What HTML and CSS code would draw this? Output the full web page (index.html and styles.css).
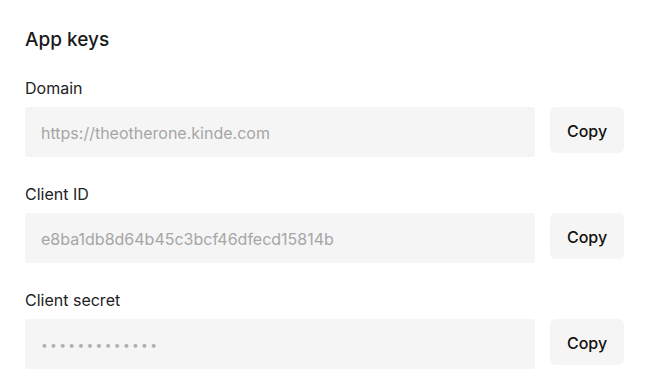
FILE: index.html
```html
<!DOCTYPE html>
<html>
<head>
<meta charset="utf-8">
<link rel="stylesheet" href="styles.css">
</head>
<body>
<section class="panel">
  <h2 class="title">App keys</h2>
  <div class="field">
    <label class="label">Domain</label>
    <div class="row">
      <div class="input">https://theotherone.kinde.com</div>
      <button class="copy">Copy</button>
    </div>
  </div>
  <div class="field">
    <label class="label">Client ID</label>
    <div class="row">
      <div class="input">e8ba1db8d64b45c3bcf46dfecd15814b</div>
      <button class="copy">Copy</button>
    </div>
  </div>
  <div class="field">
    <label class="label">Client secret</label>
    <div class="row">
      <div class="input secret">•••••••••••••</div>
      <button class="copy">Copy</button>
    </div>
  </div>
</section>
</body>
</html>
```
FILE: styles.css
```css
html, body {
  margin: 0;
  background: #ffffff;
  font-family: Inter, "Noto Sans", sans-serif;
  color: #1a1a1a;
}
.panel {
  padding: 28px 30px 0 25px;
  display: flex;
  flex-direction: column;
}
.title {
  margin: 0 0 25px 0;
  font-size: 19px;
  line-height: 24px;
  font-weight: 500;
  color: #1a1a1a;
}
.field {
  display: flex;
  flex-direction: column;
  gap: 10px;
  margin-bottom: 26px;
}
.label {
  font-size: 16px;
  line-height: 20px;
  font-weight: 400;
  color: #222;
  padding-top: 1px;
  margin-bottom: -1px;
}
.row {
  display: flex;
  align-items: flex-start;
  gap: 15px;
}
.input {
  width: 510px;
  height: 50px;
  box-sizing: border-box;
  padding: 1px 16px 0;
  display: flex;
  align-items: center;
  background: #f5f5f5;
  border-radius: 3px;
  font-size: 16px;
  color: #a6a6a6;
}
.secret {
  font-size: 12px;
  letter-spacing: 2.35px;
  color: #b0b0b0;
}
.copy {
  width: 74px;
  height: 46px;
  border: none;
  border-radius: 6px;
  background: #f5f5f5;
  font-family: Inter, "Noto Sans", sans-serif;
  font-size: 16px;
  font-weight: 500;
  color: #111;
  padding: 2px 0 0;
}
```
